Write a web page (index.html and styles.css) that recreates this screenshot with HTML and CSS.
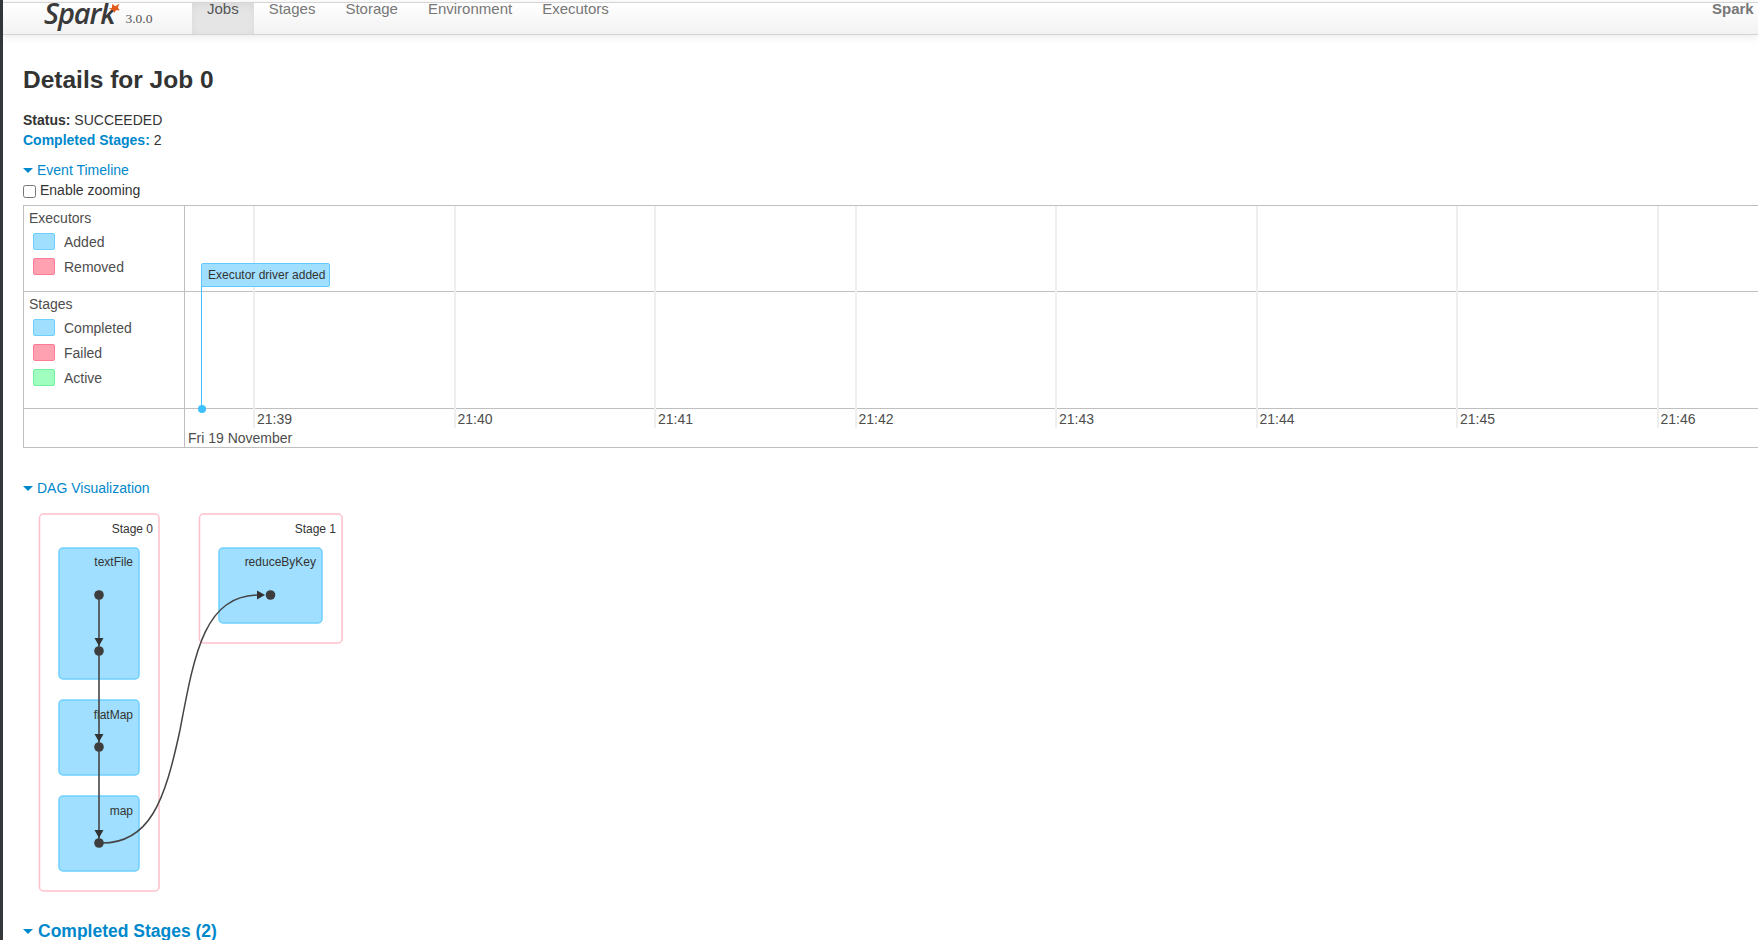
FILE: index.html
```html
<!DOCTYPE html>
<html lang="en">
<head>
<meta charset="utf-8">
<title>Details for Job 0</title>
<link rel="stylesheet" href="styles.css">
</head>
<body>
<div class="strip"></div>
<div class="page">
  <div class="topline"></div>
  <nav class="navbar">
    <div class="brand">
      <span class="logo">Spark<svg class="star" viewBox="0 0 11 9" width="12" height="10"><path d="M0.5 5 L3.5 4.5 L4 0.5 L6.5 3 L10.5 0.5 L9 4 L10.8 6.5 L7.5 6.5 L5.5 9 L4.5 6.5 Z" fill="#e25a1c"/></svg></span>
      <span class="version">3.0.0</span>
    </div>
    <a class="tab active">Jobs</a>
    <a class="tab">Stages</a>
    <a class="tab">Storage</a>
    <a class="tab">Environment</a>
    <a class="tab">Executors</a>
    <span class="app-name">Spark shell application UI</span>
  </nav>
  <main class="main">
    <h3 class="title">Details for Job 0</h3>
    <ul class="summary">
      <li><strong>Status:</strong> SUCCEEDED</li>
      <li><a class="strong-link">Completed Stages:</a> 2</li>
    </ul>
    <div class="toggle toggle-timeline"><span class="caret"></span><a>Event Timeline</a></div>
    <label class="zoom-option"><input class="zoom-check" type="checkbox">Enable zooming</label>

    <div class="timeline">
      <div class="legend">
        <div class="legend-title">Executors</div>
        <div class="legend-row"><span class="swatch blue"></span>Added</div>
        <div class="legend-row"><span class="swatch red"></span>Removed</div>
      </div>
      <div class="track"></div>
      <div class="legend">
        <div class="legend-title">Stages</div>
        <div class="legend-row"><span class="swatch blue"></span>Completed</div>
        <div class="legend-row"><span class="swatch red"></span>Failed</div>
        <div class="legend-row"><span class="swatch green"></span>Active</div>
      </div>
      <div class="track"></div>
      <div class="axis-left"></div>
      <div class="axis-date">Fri 19 November</div>
      <div class="ticks">
        <div class="tick"><span>21:39</span></div>
        <div class="tick"><span>21:40</span></div>
        <div class="tick"><span>21:41</span></div>
        <div class="tick"><span>21:42</span></div>
        <div class="tick"><span>21:43</span></div>
        <div class="tick"><span>21:44</span></div>
        <div class="tick"><span>21:45</span></div>
        <div class="tick"><span>21:46</span></div>
      </div>
      <div class="event-line"></div>
      <div class="event-dot"></div>
      <div class="event-box">Executor driver added</div>
    </div>

    <div class="toggle toggle-dag"><span class="caret"></span><a>DAG Visualization</a></div>
    <svg class="dag" viewBox="23 498 400 410" width="400" height="410">
      <rect class="stage" x="39.5" y="514" width="119.5" height="377" rx="4"/>
      <rect class="stage" x="199.5" y="514" width="142.5" height="129" rx="4"/>
      <rect class="cluster" x="59" y="548" width="80" height="131" rx="4"/>
      <rect class="cluster" x="59" y="700" width="80" height="75" rx="4"/>
      <rect class="cluster" x="59" y="796" width="80" height="75" rx="4"/>
      <rect class="cluster" x="219" y="548" width="103" height="75" rx="4"/>
      <text class="label" x="153" y="532.5">Stage 0</text>
      <text class="label" x="336" y="532.5">Stage 1</text>
      <text class="label" x="133" y="566">textFile</text>
      <text class="label" x="133" y="718.5">flatMap</text>
      <text class="label" x="133" y="814.5">map</text>
      <text class="label" x="316" y="566">reduceByKey</text>
      <path class="edge" d="M99 595 V843"/>
      <path class="edge curve" d="M99 843 C150 845 165 800 180 730 C195 650 205 595 260 595"/>
      <path class="arrow" d="M94.5 638 H103.5 L99 646 Z"/>
      <path class="arrow" d="M94.5 734 H103.5 L99 742 Z"/>
      <path class="arrow" d="M94.5 830 H103.5 L99 838 Z"/>
      <path class="arrow" d="M257 590.5 L265 595 L257 599.5 Z"/>
      <circle class="node" cx="99" cy="595" r="4.8"/>
      <circle class="node" cx="99" cy="651" r="4.8"/>
      <circle class="node" cx="99" cy="747" r="4.8"/>
      <circle class="node" cx="99" cy="843" r="4.8"/>
      <circle class="node" cx="270.5" cy="595" r="4.8"/>
    </svg>
    <h4 class="section-title"><span class="caret"></span><a>Completed Stages (2)</a></h4>
  </main>
</div>
</body>
</html>
```
FILE: styles.css
```css
html, body {
  margin: 0;
  height: 940px;
  overflow: hidden;
  background: #fff;
}
body {
  display: flex;
  font-family: "Liberation Sans", Arial, sans-serif;
  font-size: 14px;
  color: #333;
}
.strip {
  flex: 0 0 3px;
  background: #35383b;
}
.page {
  flex: 1;
  min-width: 0;
}
.topline {
  height: 2px;
  border-bottom: 1px solid #dcdcdc;
}
.navbar {
  display: flex;
  height: 31px;
  background: linear-gradient(#ffffff, #f2f2f2);
  border-bottom: 1px solid #d4d4d4;
  box-shadow: 0 1px 10px rgba(0, 0, 0, 0.1);
  overflow: hidden;
}
.brand {
  flex: 0 0 189px;
  display: flex;
  padding-left: 41px;
  box-sizing: border-box;
}
.logo {
  position: relative;
  height: 26px;
  margin-top: -6px;
  font-family: "Open Sans", sans-serif;
  font-style: italic;
  font-weight: 600;
  font-size: 29px;
  line-height: 32px;
  letter-spacing: -1.1px;
  color: #3a3a3a;
}
.star {
  position: absolute;
  left: 64px;
  top: 6px;
}
.version {
  margin: 9px 0 0 11px;
  font-family: "Liberation Serif", serif;
  font-size: 13.5px;
  line-height: 14px;
  font-weight: 400;
  color: #555;
}
.tab {
  padding: 0 15px;
  font-size: 15px;
  line-height: 12px;
  color: #777;
}
.tab.active {
  color: #555;
  background: #e5e5e5;
  box-shadow: inset 0 3px 8px rgba(0, 0, 0, 0.05);
}
.app-name {
  margin-left: auto;
  flex: 0 0 46px;
  min-width: 0;
  font-size: 15px;
  font-weight: 700;
  line-height: 12px;
  white-space: nowrap;
  color: #777;
}
.main {
  padding-left: 20px;
}
.title {
  margin: 25px 0 0;
  font-size: 24.5px;
  font-weight: 700;
  line-height: 40px;
  color: #333;
}
.summary {
  list-style: none;
  margin: 10px 0 0;
  padding: 0;
  line-height: 20px;
}
a {
  color: #0088cc;
}
.strong-link {
  font-weight: 700;
}
.toggle {
  display: flex;
  align-items: center;
  line-height: 20px;
  font-size: 14px;
}
.toggle-timeline {
  margin-top: 10px;
}
.toggle-dag {
  margin-top: 30px;
}
.caret {
  width: 0;
  height: 0;
  margin-right: 4px;
  border-left: 5px solid transparent;
  border-right: 5px solid transparent;
  border-top: 5px solid #0088cc;
}
.zoom-option {
  display: flex;
  align-items: center;
  height: 20px;
}
.zoom-check {
  width: 13px;
  height: 13px;
  margin: 2px 4px 0 0;
}
.timeline {
  position: relative;
  display: grid;
  grid-template-columns: 161px 1fr;
  grid-template-rows: 86px 117px 38px;
  margin-top: 5px;
  border: 1px solid #bfbfbf;
  border-right: 0;
  color: #4d4d4d;
  overflow: hidden;
}
.legend {
  padding: 4px 0 0 5px;
  border-right: 1px solid #bfbfbf;
  border-bottom: 1px solid #bfbfbf;
}
.legend-title {
  height: 16px;
  line-height: 16px;
  margin-bottom: 3px;
}
.legend-row {
  display: flex;
  align-items: center;
  height: 25px;
}
.swatch {
  box-sizing: border-box;
  flex: 0 0 22px;
  height: 17px;
  margin: 0 9px 0 4px;
  border-radius: 2px;
  border: 1px solid;
}
.swatch.blue {
  background: #a0dfff;
  border-color: #6fd0ff;
}
.swatch.red {
  background: #ffa1b0;
  border-color: #ff7b94;
}
.swatch.green {
  background: #a0ffc0;
  border-color: #6ff09a;
}
.track {
  border-bottom: 1px solid #bfbfbf;
}
.axis-left {
  border-right: 1px solid #bfbfbf;
}
.axis-date {
  padding: 21px 0 0 3px;
  line-height: 17px;
}
.ticks {
  position: absolute;
  top: 0;
  left: 229px;
  display: flex;
  height: 222px;
}
.tick {
  box-sizing: border-box;
  flex: 0 0 200.5px;
  display: flex;
  align-items: flex-end;
  padding-left: 2px;
  border-left: 2px solid #eeeeee;
  line-height: 18px;
}
.event-box {
  position: absolute;
  left: 177px;
  top: 57px;
  box-sizing: border-box;
  width: 129px;
  height: 24px;
  padding-left: 6px;
  background: #a0dfff;
  border: 1px solid #62c9ff;
  border-radius: 2px;
  font-size: 12px;
  line-height: 22px;
  color: #333;
  white-space: nowrap;
}
.event-line {
  position: absolute;
  left: 177px;
  top: 80px;
  width: 1px;
  height: 122px;
  background: #3ec0ff;
}
.event-dot {
  position: absolute;
  left: 173.5px;
  top: 199px;
  width: 8px;
  height: 8px;
  border-radius: 50%;
  background: #3ec0ff;
}
.dag {
  display: block;
}
.stage {
  fill: #fff;
  stroke: #ffc0cb;
  stroke-width: 1.5;
}
.cluster {
  fill: #a0dfff;
  stroke: #6fd0ff;
  stroke-width: 1.5;
}
.label {
  font-family: "Liberation Sans", Arial, sans-serif;
  font-size: 12px;
  fill: #333;
  text-anchor: end;
}
.edge {
  fill: none;
  stroke: #444;
  stroke-width: 1.6;
}
.edge.curve {
  stroke-width: 1.5;
}
.arrow {
  fill: #333;
}
.node {
  fill: #3d3d3d;
}
.section-title {
  display: flex;
  align-items: center;
  margin: 11px 0 0;
  font-size: 17.5px;
  line-height: 24px;
  font-weight: 700;
}
.section-title .caret {
  margin-right: 5px;
}
```
